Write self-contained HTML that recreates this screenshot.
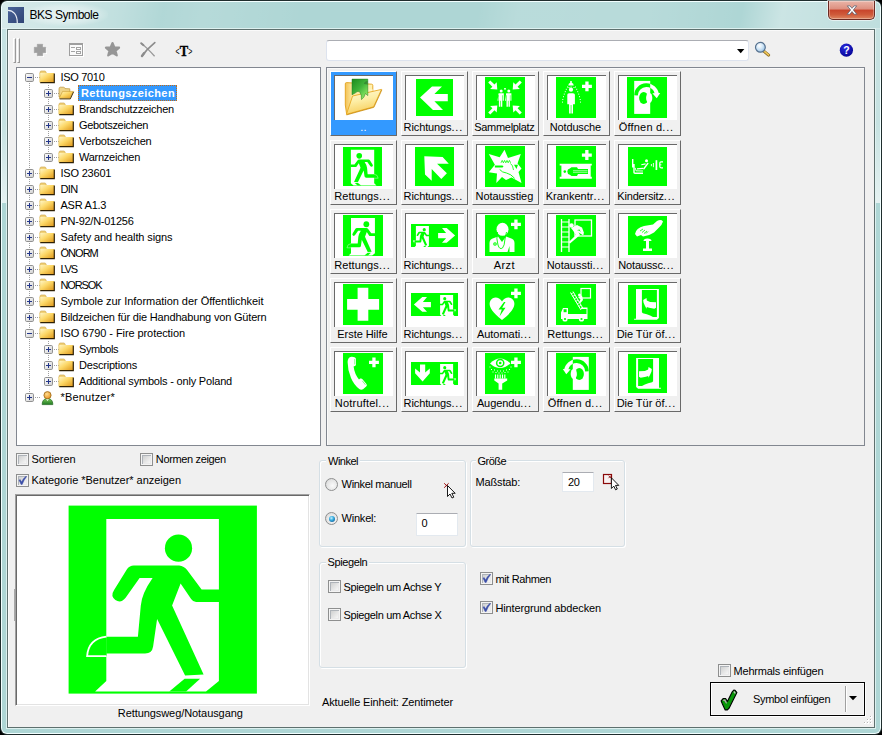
<!DOCTYPE html><html lang="de"><head><meta charset="utf-8"><title>BKS Symbole</title><style>
html,body{margin:0;padding:0}
body{width:882px;height:735px;background:#000;overflow:hidden;position:relative;font-family:"Liberation Sans", sans-serif;font-size:11px}
div,span,svg{position:absolute}
svg{overflow:visible}
.t{white-space:pre;letter-spacing:-0.22px}
#win{left:0;top:0;width:882px;height:735px;border-radius:7px 7px 7px 7px;background:#1f2d2d;overflow:hidden}
#glass{left:1px;top:1px;width:880px;height:733px;border-radius:6px;background:#f2ffff}
#streak{left:2px;top:2px;width:878px;height:731px;border-radius:5px;background:
 linear-gradient(100deg, rgba(255,255,255,0.5) 0px, rgba(255,255,255,0.36) 70px, rgba(255,255,255,0.22) 120px, rgba(255,255,255,0.04) 160px, rgba(255,255,255,0.1) 200px,rgba(255,255,255,0.0) 300px, rgba(255,255,255,0) 470px, rgba(255,255,255,0.14) 510px, rgba(255,255,255,0.12) 640px, rgba(255,255,255,0.0) 730px, rgba(255,255,255,0.36) 770px, rgba(255,255,255,0.26) 830px, rgba(255,255,255,0.2) 878px) 0 0/878px 27px no-repeat,
 #aed6d5}
.sg{top:28px;width:5px;height:175px;background:linear-gradient(to bottom, rgba(255,255,255,0.3) 0, rgba(255,255,255,0.3) 55%, rgba(255,255,255,0.68) 100%)}
#tglow{left:24px;top:3px;width:84px;height:23px;border-radius:12px;background:radial-gradient(ellipse at center, rgba(255,255,255,0.55) 0%, rgba(255,255,255,0.3) 50%, rgba(255,255,255,0) 75%)}
#close{left:828px;top:1px;width:47px;height:19px;box-sizing:border-box;border:1px solid #6b2a22;border-top:none;border-radius:0 0 5px 5px;background:linear-gradient(#eab5a8 0%,#dd8f7f 45%,#c8442b 50%,#cf5a3a 75%,#dd8560 100%);box-shadow:0 0 0 1px rgba(255,255,255,0.55), inset 0 0 0 1px rgba(255,255,255,0.3)}
#client{left:0;top:0;width:882px;height:735px}
#client:before{content:"";position:absolute;left:7px;top:29px;width:868px;height:699px;box-sizing:border-box;border:1px solid #5e706e;background:#f0f0f0;box-shadow:inset 1px 1px 0 #fafafa, 0 0 0 1px rgba(225,243,242,0.9)}
</style></head><body><div id="win"><div id="glass"></div><div id="streak"></div><div class="sg" style="left:2px"></div><div class="sg" style="left:875px"></div><svg style="left:8px;top:7px" width="16" height="16" viewBox="0 0 16 16"><defs><linearGradient id="ti" x1="0" y1="0" x2="1" y2="1"><stop offset="0" stop-color="#4a6499"/><stop offset="1" stop-color="#2f4474"/></linearGradient></defs><rect width="16" height="16" fill="url(#ti)"/><path d="M0 3.3 C5 3.3 9.3 7.5 9.3 16" fill="none" stroke="#e8edf5" stroke-width="1.2"/></svg><div id="tglow"></div><span class="t" id="t1" style="top:7.500000000000001px;font-size:12px;line-height:14px;color:#000;left:29.5px;letter-spacing:-0.459px;">BKS Symbole</span><div id="close"><svg width="12" height="10.300" viewBox="0 0 14 12" style="left:17.200px;top:3.800px"><path d="M1.5 1 L4.6 1 L7 3.9 L9.4 1 L12.5 1 L8.6 5.8 L12.7 10.8 L9.5 10.8 L7 7.7 L4.5 10.8 L1.3 10.8 L5.4 5.8 Z" fill="#fff" stroke="#5b5f6e" stroke-width="0.9" stroke-linejoin="round"/></svg></div><div id="client"><div style="left:13px;top:38px;width:3px;height:25px;box-sizing:border-box;border-left:1px solid #fff;border-top:1px solid #fff;border-right:1px solid #9a9a9a;border-bottom:1px solid #9a9a9a;background:#e4e4e4"></div><div style="left:17px;top:38px;width:3px;height:25px;box-sizing:border-box;border-left:1px solid #fff;border-top:1px solid #fff;border-right:1px solid #9a9a9a;border-bottom:1px solid #9a9a9a;background:#e4e4e4"></div><svg style="left:34px;top:44px" width="13" height="13" viewBox="0 0 13 13"><path d="M4 1h6v3h3v6h-3v3h-6v-3h-3v-6h3z" fill="#fff"/><path d="M3.300 0.300h5.400v3h3v5.400h-3v3h-5.400v-3h-3v-5.400h3z" fill="#9e9e9e" stroke="#9e9e9e" stroke-width="0.6" stroke-linejoin="round"/></svg><svg style="left:69px;top:43px" width="15" height="14" viewBox="0 0 15 14" shape-rendering="crispEdges"><rect x="0.500" y="0.500" width="13" height="12" fill="#fafafa" stroke="#9e9e9e"/><rect x="0" y="0" width="14" height="2" fill="#9e9e9e"/><path d="M2 4.500h4M2 8.500h4" stroke="#a4a4a4"/><rect x="7.500" y="4.500" width="4" height="2" fill="#fff" stroke="#a4a4a4"/><rect x="7.500" y="8.500" width="4" height="2" fill="#fff" stroke="#a4a4a4"/><path d="M14.500 1v12.500h-13.500" stroke="#fff" fill="none"/></svg><svg style="left:104px;top:41px" width="17" height="17" viewBox="0 0 17 17"><path d="M8.5 2 L10.4 6.3 L15.1 6.6 L11.6 9.700 L12.800 14.400 L8.500 11.900 L4.200 14.400 L5.400 9.700 L1.900 6.600 L6.600 6.300 Z" fill="#969696" stroke="#969696" stroke-width="2.1" stroke-linejoin="round"/></svg><svg style="left:139px;top:41px" width="18" height="17" viewBox="0 0 18 17"><path d="M2 2.2 C6 5 11 10 15.6 15.3" stroke="#9a9a9a" stroke-width="1.3" fill="none"/><path d="M15.8 1.6 C11 5.5 6.5 10 3.2 14.8" stroke="#8c8c8c" stroke-width="1.7" fill="none" stroke-linecap="round"/><path d="M2.2 2.2 L4.5 4.2" stroke="#8c8c8c" stroke-width="2" stroke-linecap="round"/><path d="M3 15 L5.2 12" stroke="#8c8c8c" stroke-width="2.4" stroke-linecap="round"/></svg><svg style="left:174px;top:42px" width="20" height="16" viewBox="174 42 20 16"><text x="184" y="55.600" font-family="Liberation Serif, serif" font-weight="bold" font-size="14" text-anchor="middle" stroke="#000" stroke-width="0.350" transform="translate(184 0) scale(0.9 1) translate(-184 0)">T</text><text x="177.600" y="54.800" font-family="Liberation Sans, sans-serif" font-size="11" text-anchor="middle" transform="translate(177.600 0) scale(0.640 1) translate(-177.600 0)">&lt;</text><text x="190.400" y="54.800" font-family="Liberation Sans, sans-serif" font-size="11" text-anchor="middle" transform="translate(190.400 0) scale(0.640 1) translate(-190.400 0)">&gt;</text></svg><div style="left:326px;top:40px;width:423px;height:21px;background:#fff;border:1px solid #dde3ee;border-top-color:#abadb3;border-radius:3px;box-sizing:border-box"></div><svg style="left:737px;top:49px" width="8" height="5" viewBox="0 0 8 5"><path d="M0 0h7.4L3.7 4.2z" fill="#000"/></svg><svg style="left:754px;top:41px" width="18" height="18" viewBox="0 0 18 18"><defs><radialGradient id="lens" cx="0.4" cy="0.35" r="0.7"><stop offset="0" stop-color="#ffffff"/><stop offset="0.5" stop-color="#cfe5f6"/><stop offset="1" stop-color="#8fbbe0"/></radialGradient></defs><path d="M9.5 9.8 L14.600 14.100" stroke="#8a6a22" stroke-width="3" stroke-linecap="round"/><path d="M9.5 9.6 L14.500 13.900" stroke="#eec658" stroke-width="1.700" stroke-linecap="round"/><circle cx="6.4" cy="6.3" r="4.9" fill="url(#lens)" stroke="#56718e" stroke-width="1.200"/></svg><svg style="left:839px;top:43px" width="15" height="15" viewBox="0 0 15 15"><defs><radialGradient id="hg" cx="0.4" cy="0.3" r="0.8"><stop offset="0" stop-color="#2a2ae0"/><stop offset="1" stop-color="#00008c"/></radialGradient></defs><circle cx="7.4" cy="7.2" r="6.6" fill="url(#hg)"/><text x="7.4" y="11" font-family="Liberation Sans, sans-serif" font-weight="bold" font-size="10.5" fill="#fff" text-anchor="middle">?</text></svg><svg width="0" height="0" style="position:absolute"><defs>
<linearGradient id="fg" x1="0" y1="0" x2="1" y2="1"><stop offset="0" stop-color="#fff6c6"/><stop offset="0.45" stop-color="#fcd766"/><stop offset="1" stop-color="#dd961a"/></linearGradient>
<linearGradient id="bg1" x1="0" y1="0" x2="1" y2="1"><stop offset="0" stop-color="#ffffff"/><stop offset="1" stop-color="#d0d0d0"/></linearGradient>
<g id="fold"><path d="M1 2.5 Q1 1 2.2 1 L5.8 1 Q6.8 1 7.2 2.6 L7.4 3.5 L1 3.5z" fill="#f1d27a" stroke="#caa040" stroke-width="0.6"/><rect x="1" y="3" width="14" height="9.4" fill="url(#fg)"/><path d="M1.2 12.700 L15.300 12.700 M15.300 13.200 L15.300 3.600" stroke="#2e2004" stroke-width="1.200" fill="none"/><path d="M0.8 3 L0.8 12.4" stroke="#e9c766" stroke-width="0.8"/></g>
<g id="foldo"><path d="M1 3 Q1 1.2 2.2 1.2 L5.4 1.2 Q6.6 1.2 7 2.6 L11.8 2.8 L11.8 6 L1 11z" fill="#efd58a" stroke="#b8923a" stroke-width="0.7"/><path d="M4.6 5.4 L15.3 5.4 L12 12.3 L1.2 12.3z" fill="url(#fg)" stroke="#c99a2e" stroke-width="0.6"/><path d="M1.6 12.9 L12.3 12.9 L15.6 5.8" stroke="#4a3508" stroke-width="1" fill="none"/></g>
<g id="plus"><rect x="0.5" y="0.5" width="8" height="8" rx="1.2" fill="url(#bg1)" stroke="#919191"/><path d="M2 4.5h5M4.5 2v5" stroke="#23368a" stroke-width="1"/></g>
<g id="minus"><rect x="0.5" y="0.5" width="8" height="8" rx="1.2" fill="url(#bg1)" stroke="#919191"/><path d="M2 4.5h5" stroke="#23368a" stroke-width="1"/></g>
</defs></svg><div style="left:16px;top:67px;width:305px;height:379px;background:#fff;border:1px solid #828790;box-sizing:border-box"></div><svg style="left:16px;top:67px" width="120" height="378" viewBox="16 67 120 378" shape-rendering="crispEdges"><g stroke="#a0a0a0" stroke-width="1" stroke-dasharray="1 1" fill="none"><path d="M29.500 83V392M48.500 85V158M48.500 341V382"/><path d="M35 77.5h5M54 93.5h5M54 109.5h5M54 125.5h5M54 141.5h5M54 157.5h5M35 173.5h5M35 189.5h5M35 205.5h5M35 221.5h5M35 237.5h5M35 253.5h5M35 269.5h5M35 285.5h5M35 301.5h5M35 317.5h5M35 333.5h5M54 349.5h5M54 365.5h5M54 381.5h5M35 397.5h5"/></g></svg><svg style="left:25px;top:73px" width="9" height="9"><use href="#minus"/></svg><svg style="left:39.3px;top:70.4px" width="17" height="14"><use href="#fold"/></svg><span class="t" id="t2" style="top:70px;font-size:11px;line-height:14px;color:#000;left:60.5px;letter-spacing:-0.311px;">ISO 7010</span><svg style="left:44px;top:89px" width="9" height="9"><use href="#plus"/></svg><svg style="left:58.3px;top:86.4px" width="17" height="14"><use href="#foldo"/></svg><div style="left:78px;top:85px;width:99px;height:16px;background:#3399ff;box-sizing:border-box;border:1px dotted #c86a10"></div><span class="t" id="t3" style="top:86px;font-size:11px;line-height:14px;color:#fff;font-weight:bold;left:81px;letter-spacing:0.399px;">Rettungszeichen</span><svg style="left:44px;top:105px" width="9" height="9"><use href="#plus"/></svg><svg style="left:58.3px;top:102.4px" width="17" height="14"><use href="#fold"/></svg><span class="t" id="t4" style="top:102px;font-size:11px;line-height:14px;color:#000;left:79.0px;letter-spacing:-0.226px;">Brandschutzzeichen</span><svg style="left:44px;top:121px" width="9" height="9"><use href="#plus"/></svg><svg style="left:58.3px;top:118.4px" width="17" height="14"><use href="#fold"/></svg><span class="t" id="t5" style="top:118px;font-size:11px;line-height:14px;color:#000;left:79.0px;letter-spacing:-0.338px;">Gebotszeichen</span><svg style="left:44px;top:137px" width="9" height="9"><use href="#plus"/></svg><svg style="left:58.3px;top:134.4px" width="17" height="14"><use href="#fold"/></svg><span class="t" id="t6" style="top:134px;font-size:11px;line-height:14px;color:#000;left:79.0px;letter-spacing:-0.194px;">Verbotszeichen</span><svg style="left:44px;top:153px" width="9" height="9"><use href="#plus"/></svg><svg style="left:58.3px;top:150.4px" width="17" height="14"><use href="#fold"/></svg><span class="t" id="t7" style="top:150px;font-size:11px;line-height:14px;color:#000;left:79.0px;letter-spacing:-0.254px;">Warnzeichen</span><svg style="left:25px;top:169px" width="9" height="9"><use href="#plus"/></svg><svg style="left:39.3px;top:166.4px" width="17" height="14"><use href="#fold"/></svg><span class="t" id="t8" style="top:166px;font-size:11px;line-height:14px;color:#000;left:60.5px;letter-spacing:-0.210px;">ISO 23601</span><svg style="left:25px;top:185px" width="9" height="9"><use href="#plus"/></svg><svg style="left:39.3px;top:182.4px" width="17" height="14"><use href="#fold"/></svg><span class="t" id="t9" style="top:182px;font-size:11px;line-height:14px;color:#000;left:60.5px;letter-spacing:-0.651px;">DIN</span><svg style="left:25px;top:201px" width="9" height="9"><use href="#plus"/></svg><svg style="left:39.3px;top:198.4px" width="17" height="14"><use href="#fold"/></svg><span class="t" id="t10" style="top:198px;font-size:11px;line-height:14px;color:#000;left:60.5px;letter-spacing:-0.250px;">ASR A1.3</span><svg style="left:25px;top:217px" width="9" height="9"><use href="#plus"/></svg><svg style="left:39.3px;top:214.4px" width="17" height="14"><use href="#fold"/></svg><span class="t" id="t11" style="top:214px;font-size:11px;line-height:14px;color:#000;left:60.5px;letter-spacing:-0.264px;">PN-92/N-01256</span><svg style="left:25px;top:233px" width="9" height="9"><use href="#plus"/></svg><svg style="left:39.3px;top:230.4px" width="17" height="14"><use href="#fold"/></svg><span class="t" id="t12" style="top:230px;font-size:11px;line-height:14px;color:#000;left:60.5px;letter-spacing:-0.103px;">Safety and health signs</span><svg style="left:25px;top:249px" width="9" height="9"><use href="#plus"/></svg><svg style="left:39.3px;top:246.4px" width="17" height="14"><use href="#fold"/></svg><span class="t" id="t13" style="top:246px;font-size:11px;line-height:14px;color:#000;left:60.5px;letter-spacing:-0.974px;">ÖNORM</span><svg style="left:25px;top:265px" width="9" height="9"><use href="#plus"/></svg><svg style="left:39.3px;top:262.4px" width="17" height="14"><use href="#fold"/></svg><span class="t" id="t14" style="top:262px;font-size:11px;line-height:14px;color:#000;left:60.5px;letter-spacing:-1.195px;">LVS</span><svg style="left:25px;top:281px" width="9" height="9"><use href="#plus"/></svg><svg style="left:39.3px;top:278.4px" width="17" height="14"><use href="#fold"/></svg><span class="t" id="t15" style="top:278px;font-size:11px;line-height:14px;color:#000;left:60.5px;letter-spacing:-1.115px;">NORSOK</span><svg style="left:25px;top:297px" width="9" height="9"><use href="#plus"/></svg><svg style="left:39.3px;top:294.4px" width="17" height="14"><use href="#fold"/></svg><span class="t" id="t16" style="top:294px;font-size:11px;line-height:14px;color:#000;left:60.5px;letter-spacing:-0.039px;">Symbole zur Information der Öffentlichkeit</span><svg style="left:25px;top:313px" width="9" height="9"><use href="#plus"/></svg><svg style="left:39.3px;top:310.4px" width="17" height="14"><use href="#fold"/></svg><span class="t" id="t17" style="top:310px;font-size:11px;line-height:14px;color:#000;left:60.5px;letter-spacing:-0.181px;">Bildzeichen für die Handhabung von Gütern</span><svg style="left:25px;top:329px" width="9" height="9"><use href="#minus"/></svg><svg style="left:39.3px;top:326.4px" width="17" height="14"><use href="#fold"/></svg><span class="t" id="t18" style="top:326px;font-size:11px;line-height:14px;color:#000;left:60.5px;letter-spacing:-0.079px;">ISO 6790 - Fire protection</span><svg style="left:44px;top:345px" width="9" height="9"><use href="#plus"/></svg><svg style="left:58.3px;top:342.4px" width="17" height="14"><use href="#fold"/></svg><span class="t" id="t19" style="top:342px;font-size:11px;line-height:14px;color:#000;left:79.0px;letter-spacing:-0.455px;">Symbols</span><svg style="left:44px;top:361px" width="9" height="9"><use href="#plus"/></svg><svg style="left:58.3px;top:358.4px" width="17" height="14"><use href="#fold"/></svg><span class="t" id="t20" style="top:358px;font-size:11px;line-height:14px;color:#000;left:79.0px;letter-spacing:-0.211px;">Descriptions</span><svg style="left:44px;top:377px" width="9" height="9"><use href="#plus"/></svg><svg style="left:58.3px;top:374.4px" width="17" height="14"><use href="#fold"/></svg><span class="t" id="t21" style="top:374px;font-size:11px;line-height:14px;color:#000;left:79.0px;letter-spacing:-0.187px;">Additional symbols - only Poland</span><svg style="left:25px;top:393px" width="9" height="9"><use href="#plus"/></svg><svg style="left:40.0px;top:389.7px" width="16" height="16" viewBox="0 0 16 16"><defs><linearGradient id="ug" x1="0" y1="0" x2="0" y2="1"><stop offset="0" stop-color="#7cc85a"/><stop offset="1" stop-color="#1f7a22"/></linearGradient><radialGradient id="uh" cx="0.4" cy="0.35" r="0.7"><stop offset="0" stop-color="#ffdc90"/><stop offset="1" stop-color="#e8901c"/></radialGradient></defs><path d="M2.2 14.6 C2.2 10.2 4.6 8.6 7.5 8.6 C10.4 8.6 12.8 10.2 12.8 14.6 Z" fill="url(#ug)" stroke="#2b6e28" stroke-width="0.8"/><path d="M6.2 9 L7.5 11.2 L8.8 9z" fill="#eef7e6"/><circle cx="7.5" cy="5.2" r="3.6" fill="url(#uh)" stroke="#9a6a1c" stroke-width="0.8"/></svg><span class="t" id="t22" style="top:390px;font-size:11px;line-height:14px;color:#000;left:60.5px;letter-spacing:0.191px;">*Benutzer*</span><div style="left:326px;top:67px;width:539px;height:379px;background:#f0f0f0;border:1px solid #828790;box-sizing:border-box;box-shadow:inset 1px 1px 0 #fafafa"></div><div style="left:330px;top:71px;width:67px;height:65px;background:#3399ff;box-sizing:border-box;border-top:1px solid #fff;border-left:1px solid #fff;border-right:1px solid #696969;border-bottom:1px solid #696969"></div><div style="left:334px;top:75px;width:59px;height:45px;background:#fff;box-sizing:border-box;border-top:1px solid #696969;border-left:1px solid #696969"></div><svg style="left:334px;top:74px" width="60" height="48" viewBox="0 0 60 48"><defs>
<linearGradient id="uf0" x1="0" y1="0" x2="1" y2="0"><stop offset="0" stop-color="#f3c255"/><stop offset="0.25" stop-color="#fde9a0"/><stop offset="1" stop-color="#fff2b4"/></linearGradient>
<linearGradient id="uf1" x1="0" y1="0" x2="0.3" y2="1"><stop offset="0" stop-color="#fffbe0"/><stop offset="0.5" stop-color="#fdeea6"/><stop offset="1" stop-color="#f7cf5e"/></linearGradient>
<linearGradient id="ug2" x1="0" y1="0" x2="0.8" y2="1"><stop offset="0" stop-color="#1c8a1c"/><stop offset="0.5" stop-color="#3fb33a"/><stop offset="1" stop-color="#96f06a"/></linearGradient></defs>
<path d="M11.300 9.800 Q11.300 8.600 12.600 8.600 L37.600 10.200 Q38.800 10.300 38.800 11.500 L38.800 33 L12.600 40 L11.300 31 Z" fill="url(#uf0)" stroke="#e3a21a" stroke-width="0.9" stroke-linejoin="round"/>
<path d="M33.800 15.600 L38.800 15.200 L38.800 33 L33.800 34.400z" fill="#fff6c8" opacity="0.8"/>
<path d="M18.600 22 L47.500 15.400 L39.600 32.800 L12.400 40.400 Z" fill="url(#uf1)" stroke="#e9a820" stroke-width="0.9" stroke-linejoin="round"/>
<path d="M12.600 40.900 L39.900 33.300 L47.900 15.800" fill="none" stroke="#c98e14" stroke-width="0.8"/>
<path d="M18 5.100 L33.800 5.100 L33.800 21.600 L31.400 19.600 Q30.500 23.500 27.500 25.600 Q28 21 25.500 17.600 Q23 17 21.500 18.800 L18 20.800 Z" fill="url(#ug2)" stroke="#1d7a1d" stroke-width="0.5"/>
<path d="M29.800 9.800 Q30.500 7.500 33.600 6.800 L33.600 10.600 Q31.500 10.400 29.800 9.800z" fill="#2a6a2a" opacity="0.55"/>
<path d="M18.800 21.600 L24 19.400 L26.400 20.800 L27.200 23.800 L31.200 19.800 L34 21.800 L34 15.700 L47.500 15.400 L39.600 32.800 L12.400 40.400 Z" fill="url(#uf1)" opacity="0"/>
</svg><span class="t" id="t23" style="top:120px;font-size:11px;line-height:14px;color:#fff;left:263.5px;width:200px;text-align:center;letter-spacing:0.188px;">..</span><div style="left:401px;top:71px;width:67px;height:65px;background:#f0f0f0;box-sizing:border-box;border-top:1px solid #fff;border-left:1px solid #fff;border-right:1px solid #696969;border-bottom:1px solid #696969"></div><div style="left:405px;top:75px;width:59px;height:45px;background:#fff;box-sizing:border-box;border-top:1px solid #696969;border-left:1px solid #696969"></div><svg style="left:416px;top:79px" width="37" height="37" viewBox="0 0 37 37"><rect width="37" height="37" fill="#00ff00"/><path d="M4 18.6 L16 7.4 L26 7.4 L18.4 15 L31.8 15 L31.8 22.2 L18.4 22.2 L27 31 L17 31 Z" fill="#fff"/></svg><span class="t" id="t24" style="top:120px;font-size:11px;line-height:14px;color:#000;left:333.4px;width:200px;text-align:center;letter-spacing:-0.116px;">Richtungs<span style="position:static;letter-spacing:0.850px">...</span></span><div style="left:472px;top:71px;width:67px;height:65px;background:#f0f0f0;box-sizing:border-box;border-top:1px solid #fff;border-left:1px solid #fff;border-right:1px solid #696969;border-bottom:1px solid #696969"></div><div style="left:476px;top:75px;width:59px;height:45px;background:#fff;box-sizing:border-box;border-top:1px solid #696969;border-left:1px solid #696969"></div><svg style="left:485px;top:77px" width="40" height="41" viewBox="0 0 40 41"><rect width="40" height="41" fill="#00ff00"/><path d="M5.3 3.4 L9.5 7.6 L11.7 5.3 L12.3 12.5 L5.1 11.9 L7.4 9.7 L3.2 5.5Z" fill="#fff"/><path d="M36.8 5.5 L32.6 9.7 L34.9 11.9 L27.7 12.5 L28.3 5.3 L30.5 7.6 L34.7 3.4Z" fill="#fff"/><path d="M3.2 35.4 L7.4 31.2 L5.1 29.0 L12.3 28.4 L11.7 35.6 L9.5 33.3 L5.3 37.5Z" fill="#fff"/><path d="M34.7 37.5 L30.5 33.3 L28.3 35.6 L27.7 28.4 L34.9 29.0 L32.6 31.2 L36.8 35.4Z" fill="#fff"/><circle cx="16.2" cy="14" r="1.5" fill="#fff"/><path d="M13.6 16.2h5.2v7.5h-1v-5.5h-0.5v11.5h-1.4v-6h-0.6v6h-1.4v-11.5h-0.5v5.5h-0.9z" fill="#fff"/><circle cx="23.8" cy="14" r="1.5" fill="#fff"/><path d="M21.2 16.2h5.2v7.5h-1v-5.5h-0.5v11.5h-1.4v-6h-0.6v6h-1.4v-11.5h-0.5v5.5h-0.9z" fill="#fff"/><rect x="19.2" y="11" width="1.6" height="1.6" fill="#fff"/></svg><span class="t" id="t25" style="top:120px;font-size:11px;line-height:14px;color:#000;left:404.4px;width:200px;text-align:center;letter-spacing:-0.307px;">Sammelplatz</span><div style="left:543px;top:71px;width:67px;height:65px;background:#f0f0f0;box-sizing:border-box;border-top:1px solid #fff;border-left:1px solid #fff;border-right:1px solid #696969;border-bottom:1px solid #696969"></div><div style="left:547px;top:75px;width:59px;height:45px;background:#fff;box-sizing:border-box;border-top:1px solid #696969;border-left:1px solid #696969"></div><svg style="left:556px;top:77px" width="40" height="41" viewBox="0 0 40 41"><rect width="40" height="41" fill="#00ff00"/><path d="M29.3 4.4h3.3v3.3h3.3v3.3h-3.3v3.3h-3.3v-3.3h-3.3v-3.3h3.3z" fill="#fff"/><path d="M12.300 8.600 Q12.300 6.200 14.200 5.800 L14.200 4h1.600 L15.800 5.800 Q17.700 6.200 17.700 8.600z" fill="#fff"/><circle cx="15" cy="12.700" r="2.100" fill="#fff"/><path d="M11.300 17.800 Q11.300 16.200 13 16.200 L17 16.200 Q18.900 16.200 18.900 17.800 L18.900 27.300 L17 27.300 L17 36.500 L15.400 36.500 L15.400 28 L14.700 28 L14.700 36.500 L13.100 36.500 L13.100 27.300 L11.300 27.300z" fill="#fff"/><g fill="#fff"><rect x="11" y="9.5" width="1" height="1"/><rect x="9.8" y="11.8" width="1" height="1"/><rect x="8.8" y="14.2" width="1" height="1"/><rect x="7.8" y="16.6" width="1" height="1"/><rect x="7" y="19.2" width="1" height="1"/><rect x="6.3" y="22" width="1" height="1"/><rect x="6" y="24.6" width="1" height="1"/><rect x="12.5" y="10" width="1" height="1"/><rect x="19" y="9.5" width="1" height="1"/><rect x="20.2" y="11.8" width="1" height="1"/><rect x="21.2" y="14.2" width="1" height="1"/><rect x="22.2" y="16.6" width="1" height="1"/><rect x="23" y="19.2" width="1" height="1"/><rect x="23.7" y="22" width="1" height="1"/><rect x="24" y="24.6" width="1" height="1"/><rect x="17.5" y="10" width="1" height="1"/><rect x="14.6" y="9.5" width="1" height="1"/></g></svg><span class="t" id="t26" style="top:120px;font-size:11px;line-height:14px;color:#000;left:475.4px;width:200px;text-align:center;letter-spacing:-0.155px;">Notdusche</span><div style="left:614px;top:71px;width:67px;height:65px;background:#f0f0f0;box-sizing:border-box;border-top:1px solid #fff;border-left:1px solid #fff;border-right:1px solid #696969;border-bottom:1px solid #696969"></div><div style="left:618px;top:75px;width:59px;height:45px;background:#fff;box-sizing:border-box;border-top:1px solid #696969;border-left:1px solid #696969"></div><svg style="left:627px;top:77px" width="40" height="41" viewBox="0 0 40 41"><rect width="40" height="41" fill="#00ff00"/><clipPath id="cpturnR"><rect x="7.200" y="3.900" width="16" height="33"/></clipPath><path d="M8.900 18.300 A10.600 10.600 0 0 1 30 17.400" fill="none" stroke="#fff" stroke-width="3.800"/><path d="M25.400 16.300 L33.200 16 L29.700 21.300z" fill="#fff"/><rect x="7.200" y="3.900" width="16" height="33" fill="#fff"/><g clip-path="url(#cpturnR)"><path d="M8.900 18.300 A10.600 10.600 0 0 1 30 17.400" fill="none" stroke="#00ff00" stroke-width="3.800"/><path d="M25.400 16.300 L33.200 16 L29.700 21.300z" fill="#00ff00"/></g><ellipse cx="16.700" cy="21" rx="4.600" ry="6.100" fill="#00ff00"/><ellipse cx="22.200" cy="20.900" rx="3.100" ry="5.200" fill="#fff"/></svg><span class="t" id="t27" style="top:120px;font-size:11px;line-height:14px;color:#000;left:546.4px;width:200px;text-align:center;letter-spacing:0.185px;">Öffnen d<span style="position:static;letter-spacing:0.850px">...</span></span><div style="left:330px;top:140px;width:67px;height:65px;background:#f0f0f0;box-sizing:border-box;border-top:1px solid #fff;border-left:1px solid #fff;border-right:1px solid #696969;border-bottom:1px solid #696969"></div><div style="left:334px;top:144px;width:59px;height:45px;background:#fff;box-sizing:border-box;border-top:1px solid #696969;border-left:1px solid #696969"></div><svg style="left:343px;top:147px" width="39" height="39" viewBox="0 0 39 39"><rect width="39" height="39" fill="#00ff00"/><g transform="translate(39,0) scale(-1,1)"><g transform="scale(0.2071 0.2074)"><path d="M37.7 13.5 L150.300 13.5 L150.3 175.300 L137.4 186 L26.500 186 L37.7 175.3 Z" fill="#fff"/><g fill="#00ff00"><circle cx="109.9" cy="42.6" r="13.6"/><path d="M65.1 59.8 L110.5 59.8 Q115.5 60.3 118.5 64.5 L133 83.9 L151.500 83.9 L151.500 96.5 L127.5 96.500 Q124.5 96.5 122.5 93.5 L112 78 L103.5 100 L135.000 168.8 L116.5 170 L88.5 113.5 L84.5 140.8 Q83.5 147.8 76.500 147.8 L37.7 147.8 L37.7 131.1 L69.3 131.1 L72.2 100 Q73 88 84 72.3 L71 72.3 L57 92.100 Q52.5 98 46.800 94.5 Q41.5 90.5 45.500 84.500 L58.5 63.5 Q61 59.8 65.1 59.8z"/><path d="M116 173.1 L131.500 173.1 L117.5 186 L100.700 186z"/></g><path d="M37.9 131.1 Q20 133 18.5 150.500 L37.9 150.500" fill="#00ff00" stroke="#fff" stroke-width="1.800"/></g></g></svg><span class="t" id="t28" style="top:189px;font-size:11px;line-height:14px;color:#000;left:262.4px;width:200px;text-align:center;letter-spacing:0.094px;">Rettungs<span style="position:static;letter-spacing:0.850px">...</span></span><div style="left:401px;top:140px;width:67px;height:65px;background:#f0f0f0;box-sizing:border-box;border-top:1px solid #fff;border-left:1px solid #fff;border-right:1px solid #696969;border-bottom:1px solid #696969"></div><div style="left:405px;top:144px;width:59px;height:45px;background:#fff;box-sizing:border-box;border-top:1px solid #696969;border-left:1px solid #696969"></div><svg style="left:415px;top:147px" width="39" height="39" viewBox="0 0 39 39"><rect width="39" height="39" fill="#00ff00"/><path d="M9.300 9.300 L27.600 10 L33.800 16.700 L22.100 16.700 L31.900 26.300 L26.300 31.900 L16.700 22.100 L16.700 33.800 L10 27.600 Z" fill="#fff"/></svg><span class="t" id="t29" style="top:189px;font-size:11px;line-height:14px;color:#000;left:333.4px;width:200px;text-align:center;letter-spacing:-0.116px;">Richtungs<span style="position:static;letter-spacing:0.850px">...</span></span><div style="left:472px;top:140px;width:67px;height:65px;background:#f0f0f0;box-sizing:border-box;border-top:1px solid #fff;border-left:1px solid #fff;border-right:1px solid #696969;border-bottom:1px solid #696969"></div><div style="left:476px;top:144px;width:59px;height:45px;background:#fff;box-sizing:border-box;border-top:1px solid #696969;border-left:1px solid #696969"></div><svg style="left:485px;top:146px" width="40" height="41" viewBox="0 0 40 41"><rect width="40" height="41" fill="#00ff00"/><path d="M19.500 3.800 L23 12 L35.800 7.900 L32.500 17.500 L36.500 22.500 L33.500 26 L36.500 37.100 L26.500 31.500 L21 34 L17 31 L11.300 37.100 L12 27.600 L3.800 26.300 L9.900 18.800 L3.800 7.900 L14.700 11.300 Z" fill="#fff"/><path d="M9.900 19.500 L17.500 19.500 L18.500 20.500 L17.500 21.600 L9.900 21.600z" fill="#00ff00"/><path d="M29 18.800 L33 18.800 L31.500 22.900z" fill="#00ff00"/><path d="M16 16.800 l1.200 -2.400 l1.200 2.400 l1.200 -2.400 l1.200 2.400 l1.200 -2.400 l1.200 2.400 l1.200 -2.400 l1.200 2.400" fill="none" stroke="#00ff00" stroke-width="0.800"/><path d="M14.700 23.500 Q17 26.500 21.500 27 Q26 28 29.700 32.400" fill="none" stroke="#00ff00" stroke-width="0.900"/><path d="M25.500 17.500 Q28 19 28.500 24" fill="none" stroke="#00ff00" stroke-width="0.800"/></svg><span class="t" id="t30" style="top:189px;font-size:11px;line-height:14px;color:#000;left:404.4px;width:200px;text-align:center;letter-spacing:-0.036px;">Notausstieg</span><div style="left:543px;top:140px;width:67px;height:65px;background:#f0f0f0;box-sizing:border-box;border-top:1px solid #fff;border-left:1px solid #fff;border-right:1px solid #696969;border-bottom:1px solid #696969"></div><div style="left:547px;top:144px;width:59px;height:45px;background:#fff;box-sizing:border-box;border-top:1px solid #696969;border-left:1px solid #696969"></div><svg style="left:556px;top:146px" width="40" height="41" viewBox="0 0 40 41"><rect width="40" height="41" fill="#00ff00"/><path d="M29.2 4.1h3.3v3.3h3.3v3.3h-3.3v3.3h-3.3v-3.3h-3.3v-3.3h3.3z" fill="#fff"/><path d="M3.700 17.700 H35.800 V19.500 H34.700 V30.700 H35.800 V32.700 H3.700 V30.700 H5.400 V19.500 H3.700z" fill="#fff"/><circle cx="8.800" cy="25.600" r="1.300" fill="#00ff00"/><path d="M11.300 25.500 Q11.300 22.800 13.800 22.400 L15.500 21.300 L21 21.300 L22 22.900 L32 22.900 L32 28 L22 28 L21 29.900 L15.500 29.900 L13.800 28.700 Q11.300 28.300 11.300 25.500z" fill="#00ff00"/><path d="M17 24.700 H31.500 M17 26.300 H31.500" stroke="#fff" stroke-width="0.600"/></svg><span class="t" id="t31" style="top:189px;font-size:11px;line-height:14px;color:#000;left:475.4px;width:200px;text-align:center;letter-spacing:0.009px;">Krankentr<span style="position:static;letter-spacing:0.850px">...</span></span><div style="left:614px;top:140px;width:67px;height:65px;background:#f0f0f0;box-sizing:border-box;border-top:1px solid #fff;border-left:1px solid #fff;border-right:1px solid #696969;border-bottom:1px solid #696969"></div><div style="left:618px;top:144px;width:59px;height:45px;background:#fff;box-sizing:border-box;border-top:1px solid #696969;border-left:1px solid #696969"></div><svg style="left:628px;top:147px" width="39" height="39" viewBox="0 0 39 39"><rect width="39" height="39" fill="#00ff00"/><path d="M4.700 12 V20.500 M6 17 V25.500 Q6 26.200 7 26.200 H15" fill="none" stroke="#fff" stroke-width="1.400"/><path d="M7.200 20.800 L8 23.800 L15 24" fill="none" stroke="#fff" stroke-width="0.900"/><circle cx="18.500" cy="13.700" r="1.500" fill="#fff"/><path d="M19.600 15.500 L20.600 16.600 L16.200 22.600 L14.800 22 Z" fill="#fff"/><path d="M13.300 17.700 L17.600 16.900 M9 21.900 L15 21.400" stroke="#fff" stroke-width="1.100"/><path d="M23.400 17v2.200M25.400 16v4.200" stroke="#fff" stroke-width="0.900"/><path d="M28.400 13.200v9.800" stroke="#fff" stroke-width="1.700"/><path d="M35 14.800 H33 Q31.800 14.800 31.800 16 V19.600 Q31.800 20.800 33 20.800 H35" fill="none" stroke="#fff" stroke-width="1.200"/><path d="M31.500 17.800h2" stroke="#fff" stroke-width="0.800"/></svg><span class="t" id="t32" style="top:189px;font-size:11px;line-height:14px;color:#000;left:546.4px;width:200px;text-align:center;letter-spacing:-0.182px;">Kindersitz<span style="position:static;letter-spacing:0.850px">...</span></span><div style="left:330px;top:209px;width:67px;height:65px;background:#f0f0f0;box-sizing:border-box;border-top:1px solid #fff;border-left:1px solid #fff;border-right:1px solid #696969;border-bottom:1px solid #696969"></div><div style="left:334px;top:213px;width:59px;height:45px;background:#fff;box-sizing:border-box;border-top:1px solid #696969;border-left:1px solid #696969"></div><svg style="left:343px;top:215px" width="40" height="41" viewBox="0 0 40 41"><rect width="40" height="41" fill="#00ff00"/><g transform="scale(0.2124 0.2181)"><path d="M37.7 13.5 L150.300 13.5 L150.3 175.300 L137.4 186 L26.500 186 L37.7 175.3 Z" fill="#fff"/><g fill="#00ff00"><circle cx="109.9" cy="42.6" r="13.6"/><path d="M65.1 59.8 L110.5 59.8 Q115.5 60.3 118.5 64.5 L133 83.9 L151.500 83.9 L151.500 96.5 L127.5 96.500 Q124.5 96.5 122.5 93.5 L112 78 L103.5 100 L135.000 168.8 L116.5 170 L88.5 113.5 L84.5 140.8 Q83.5 147.8 76.500 147.8 L37.7 147.8 L37.7 131.1 L69.3 131.1 L72.2 100 Q73 88 84 72.3 L71 72.3 L57 92.100 Q52.5 98 46.800 94.5 Q41.5 90.5 45.500 84.500 L58.5 63.5 Q61 59.8 65.1 59.8z"/><path d="M116 173.1 L131.500 173.1 L117.5 186 L100.700 186z"/></g><path d="M37.9 131.1 Q20 133 18.5 150.500 L37.9 150.500" fill="#00ff00" stroke="#fff" stroke-width="1.800"/></g></svg><span class="t" id="t33" style="top:258px;font-size:11px;line-height:14px;color:#000;left:262.4px;width:200px;text-align:center;letter-spacing:0.094px;">Rettungs<span style="position:static;letter-spacing:0.850px">...</span></span><div style="left:401px;top:209px;width:67px;height:65px;background:#f0f0f0;box-sizing:border-box;border-top:1px solid #fff;border-left:1px solid #fff;border-right:1px solid #696969;border-bottom:1px solid #696969"></div><div style="left:405px;top:213px;width:59px;height:45px;background:#fff;box-sizing:border-box;border-top:1px solid #696969;border-left:1px solid #696969"></div><svg style="left:411px;top:224px" width="47" height="23" viewBox="0 0 47 23"><rect width="47" height="23" fill="#00ff00"/><g transform="translate(0.550 0.460) scale(0.11550 0.12170)"><path d="M37.7 13.5 L150.300 13.5 L150.3 175.300 L137.4 186 L26.500 186 L37.7 175.3 Z" fill="#fff"/><g fill="#00ff00"><circle cx="109.9" cy="42.6" r="13.6"/><path d="M65.1 59.8 L110.5 59.8 Q115.5 60.3 118.5 64.5 L133 83.9 L151.500 83.9 L151.500 96.5 L127.5 96.500 Q124.5 96.5 122.5 93.5 L112 78 L103.5 100 L135.000 168.8 L116.5 170 L88.5 113.5 L84.5 140.8 Q83.5 147.8 76.500 147.8 L37.7 147.8 L37.7 131.1 L69.3 131.1 L72.2 100 Q73 88 84 72.3 L71 72.3 L57 92.100 Q52.5 98 46.800 94.5 Q41.5 90.5 45.500 84.500 L58.5 63.5 Q61 59.8 65.1 59.8z"/><path d="M116 173.1 L131.500 173.1 L117.5 186 L100.700 186z"/></g><path d="M37.9 131.1 Q20 133 18.5 150.500 L37.9 150.500" fill="#00ff00" stroke="#fff" stroke-width="1.800"/></g><rect x="2.300" y="16.300" width="1.300" height="1.300" transform="rotate(-40 3 17)" fill="#fff"/><path d="M44.100 11.600 L35.700 4.100 L31 4.100 L35.100 9 L27.100 9 L27.100 14.200 L35.100 14.200 L31 18.800 L35.700 18.800z" fill="#fff"/></svg><span class="t" id="t34" style="top:258px;font-size:11px;line-height:14px;color:#000;left:333.4px;width:200px;text-align:center;letter-spacing:-0.116px;">Richtungs<span style="position:static;letter-spacing:0.850px">...</span></span><div style="left:472px;top:209px;width:67px;height:65px;background:#f0f0f0;box-sizing:border-box;border-top:1px solid #fff;border-left:1px solid #fff;border-right:1px solid #696969;border-bottom:1px solid #696969"></div><div style="left:476px;top:213px;width:59px;height:45px;background:#fff;box-sizing:border-box;border-top:1px solid #696969;border-left:1px solid #696969"></div><svg style="left:485px;top:215px" width="40" height="41" viewBox="0 0 40 41"><rect width="40" height="41" fill="#00ff00"/><path d="M29.3 4.4h3.3v3.3h3.3v3.3h-3.3v3.3h-3.3v-3.3h-3.3v-3.3h3.3z" fill="#fff"/><ellipse cx="17.500" cy="14.300" rx="6" ry="6.500" fill="#fff"/><path d="M4.5 37 L4.5 28 Q4.5 24 9 23 L13 21.5 L17 27 L21 21.5 L25 23 Q29.5 24 29.5 28 L29.5 37 L24.5 37 L24.5 31 L22.5 37z" fill="#fff"/><path d="M12.5 17 Q11 24 13 30 Q14.5 35 17.5 33 Q19.5 31 20 24 L21.5 17" fill="none" stroke="#00ff00" stroke-width="0.9"/><circle cx="10" cy="29" r="1.8" fill="#00ff00"/><circle cx="10" cy="29" r="0.7" fill="#fff"/></svg><span class="t" id="t35" style="top:258px;font-size:11px;line-height:14px;color:#000;left:404.4px;width:200px;text-align:center;letter-spacing:0.409px;">Arzt</span><div style="left:543px;top:209px;width:67px;height:65px;background:#f0f0f0;box-sizing:border-box;border-top:1px solid #fff;border-left:1px solid #fff;border-right:1px solid #696969;border-bottom:1px solid #696969"></div><div style="left:547px;top:213px;width:59px;height:45px;background:#fff;box-sizing:border-box;border-top:1px solid #696969;border-left:1px solid #696969"></div><svg style="left:556px;top:215px" width="40" height="41" viewBox="0 0 40 41"><rect width="40" height="41" fill="#00ff00"/><path d="M5.5 4v33M13 4v33" stroke="#fff" stroke-width="1.3"/><path d="M5.5 7h7.5M5.5 12h7.5M5.5 17h7.5M5.5 22h7.5M5.5 27h7.5M5.5 32h7.5" stroke="#fff" stroke-width="1.1"/><rect x="19" y="5" width="16.5" height="16" fill="none" stroke="#fff" stroke-width="1.3"/><circle cx="15.5" cy="10.5" r="2.2" fill="#fff"/><path d="M15 13 L21 10 L26 12.5 L28 18 L26 19 L23.5 14.5 L21.5 15 L24 20 L14 28.5 L12.8 27 L20 20 L17 15.5z" fill="#fff"/><path d="M22 16 L27.5 19.5" stroke="#fff" stroke-width="2"/></svg><span class="t" id="t36" style="top:258px;font-size:11px;line-height:14px;color:#000;left:475.4px;width:200px;text-align:center;letter-spacing:-0.009px;">Notaussti<span style="position:static;letter-spacing:0.850px">...</span></span><div style="left:614px;top:209px;width:67px;height:65px;background:#f0f0f0;box-sizing:border-box;border-top:1px solid #fff;border-left:1px solid #fff;border-right:1px solid #696969;border-bottom:1px solid #696969"></div><div style="left:618px;top:213px;width:59px;height:45px;background:#fff;box-sizing:border-box;border-top:1px solid #696969;border-left:1px solid #696969"></div><svg style="left:628px;top:216px" width="39" height="39" viewBox="0 0 39 39"><rect width="39" height="39" fill="#00ff00"/><path d="M7 18 Q8 12 16 10 L25 8.5 L29 5 Q33 3 35 5.5 Q34 9 31 11.5 L26 16.5 Q21 20 15 20.5 L13 19 L9 20.5z" fill="#fff"/><path d="M12 15l3-2M14 16.5l3-2.5M16 17.5l3-2.5M18 17.5l2-2" stroke="#00ff00" stroke-width="0.8"/><path d="M15.5 25 Q15.5 22.5 19.5 22.5 Q23.5 22.5 23.5 25 L21 25 L21 32.5 L24 32.5 L24 35 L15 35 L15 32.5 L18 32.5 L18 25z" fill="#fff"/></svg><span class="t" id="t37" style="top:258px;font-size:11px;line-height:14px;color:#000;left:546.4px;width:200px;text-align:center;letter-spacing:-0.172px;">Notaussc<span style="position:static;letter-spacing:0.850px">...</span></span><div style="left:330px;top:278px;width:67px;height:65px;background:#f0f0f0;box-sizing:border-box;border-top:1px solid #fff;border-left:1px solid #fff;border-right:1px solid #696969;border-bottom:1px solid #696969"></div><div style="left:334px;top:282px;width:59px;height:45px;background:#fff;box-sizing:border-box;border-top:1px solid #696969;border-left:1px solid #696969"></div><svg style="left:343px;top:284px" width="40" height="41" viewBox="0 0 40 41"><rect width="40" height="41" fill="#00ff00"/><path d="M14.6 3.8h10.7v11.1h10.8v10.8H25.3v11.1H14.6V25.7H4.1V14.9h10.5z" fill="#fff"/></svg><span class="t" id="t38" style="top:327px;font-size:11px;line-height:14px;color:#000;left:262.4px;width:200px;text-align:center;letter-spacing:-0.050px;">Erste Hilfe</span><div style="left:401px;top:278px;width:67px;height:65px;background:#f0f0f0;box-sizing:border-box;border-top:1px solid #fff;border-left:1px solid #fff;border-right:1px solid #696969;border-bottom:1px solid #696969"></div><div style="left:405px;top:282px;width:59px;height:45px;background:#fff;box-sizing:border-box;border-top:1px solid #696969;border-left:1px solid #696969"></div><svg style="left:411px;top:293px" width="47" height="23" viewBox="0 0 47 23"><rect width="47" height="23" fill="#00ff00"/><g transform="translate(47,0) scale(-1,1)"><g transform="translate(0.550 0.460) scale(0.11550 0.12170)"><path d="M37.7 13.5 L150.300 13.5 L150.3 175.300 L137.4 186 L26.500 186 L37.7 175.3 Z" fill="#fff"/><g fill="#00ff00"><circle cx="109.9" cy="42.6" r="13.6"/><path d="M65.1 59.8 L110.5 59.8 Q115.5 60.3 118.5 64.5 L133 83.9 L151.500 83.9 L151.500 96.5 L127.5 96.500 Q124.5 96.5 122.5 93.5 L112 78 L103.5 100 L135.000 168.8 L116.5 170 L88.5 113.5 L84.5 140.8 Q83.5 147.8 76.500 147.8 L37.7 147.8 L37.7 131.1 L69.3 131.1 L72.2 100 Q73 88 84 72.3 L71 72.3 L57 92.100 Q52.5 98 46.800 94.5 Q41.5 90.5 45.500 84.500 L58.5 63.5 Q61 59.8 65.1 59.8z"/><path d="M116 173.1 L131.500 173.1 L117.5 186 L100.700 186z"/></g><path d="M37.9 131.1 Q20 133 18.5 150.500 L37.9 150.500" fill="#00ff00" stroke="#fff" stroke-width="1.800"/></g><rect x="2.300" y="16.300" width="1.300" height="1.300" transform="rotate(-40 3 17)" fill="#fff"/><path d="M44.100 11.600 L35.700 4.100 L31 4.100 L35.100 9 L27.100 9 L27.100 14.200 L35.100 14.200 L31 18.800 L35.700 18.800z" fill="#fff"/></g></svg><span class="t" id="t39" style="top:327px;font-size:11px;line-height:14px;color:#000;left:333.4px;width:200px;text-align:center;letter-spacing:-0.116px;">Richtungs<span style="position:static;letter-spacing:0.850px">...</span></span><div style="left:472px;top:278px;width:67px;height:65px;background:#f0f0f0;box-sizing:border-box;border-top:1px solid #fff;border-left:1px solid #fff;border-right:1px solid #696969;border-bottom:1px solid #696969"></div><div style="left:476px;top:282px;width:59px;height:45px;background:#fff;box-sizing:border-box;border-top:1px solid #696969;border-left:1px solid #696969"></div><svg style="left:485px;top:284px" width="40" height="41" viewBox="0 0 40 41"><rect width="40" height="41" fill="#00ff00"/><path d="M29.3 4.4h3.3v3.3h3.3v3.3h-3.3v3.3h-3.3v-3.3h-3.3v-3.3h3.3z" fill="#fff"/><path d="M17 36 C 4 26 3.5 20 5.5 16.5 C 8 12.5 14 12.5 17 17.5 C 20 12.5 26 12.5 28.5 16.5 C 30.5 20 30 26 17 36 Z" fill="#fff"/><path d="M19 18 L13.5 25.5 L16.8 25.5 L14.5 32.5 L20.5 23.8 L17.2 23.8 L20.5 18z" fill="#00ff00"/></svg><span class="t" id="t40" style="top:327px;font-size:11px;line-height:14px;color:#000;left:404.4px;width:200px;text-align:center;letter-spacing:-0.018px;">Automati<span style="position:static;letter-spacing:0.850px">...</span></span><div style="left:543px;top:278px;width:67px;height:65px;background:#f0f0f0;box-sizing:border-box;border-top:1px solid #fff;border-left:1px solid #fff;border-right:1px solid #696969;border-bottom:1px solid #696969"></div><div style="left:547px;top:282px;width:59px;height:45px;background:#fff;box-sizing:border-box;border-top:1px solid #696969;border-left:1px solid #696969"></div><svg style="left:556px;top:284px" width="40" height="41" viewBox="0 0 40 41"><rect width="40" height="41" fill="#00ff00"/><rect x="25" y="4.5" width="9.5" height="9.5" fill="none" stroke="#fff" stroke-width="1.2"/><path d="M14.5 8.5 L25 26 M17 7.5 L27 24.5" stroke="#fff" stroke-width="1"/><path d="M15 10l2.6-1.4M16.5 12.5l2.6-1.4M18 15l2.6-1.4M19.5 17.5l2.6-1.4M21 20l2.6-1.4M22.5 22.5l2.6-1.4" stroke="#fff" stroke-width="0.8"/><circle cx="23.5" cy="11" r="1.5" fill="#fff"/><path d="M22 13 L26 11.5 L27 16 L24.5 19 L23 18 L24.5 15.5z" fill="#fff"/><path d="M5 35 L5 28.5 L7 24 L12 24 L12 30 L30.5 30 L30.5 25 L25 25 L25 23.5 L31.5 23.5 L31.5 35 Z" fill="#fff"/><circle cx="9" cy="35" r="2.6" fill="#fff"/><circle cx="9" cy="35" r="1.1" fill="#00ff00"/><circle cx="25.5" cy="35" r="2.6" fill="#fff"/><circle cx="25.5" cy="35" r="1.1" fill="#00ff00"/><rect x="7.6" y="25.2" width="3" height="3" fill="#00ff00"/></svg><span class="t" id="t41" style="top:327px;font-size:11px;line-height:14px;color:#000;left:475.4px;width:200px;text-align:center;letter-spacing:0.094px;">Rettungs<span style="position:static;letter-spacing:0.850px">...</span></span><div style="left:614px;top:278px;width:67px;height:65px;background:#f0f0f0;box-sizing:border-box;border-top:1px solid #fff;border-left:1px solid #fff;border-right:1px solid #696969;border-bottom:1px solid #696969"></div><div style="left:618px;top:282px;width:59px;height:45px;background:#fff;box-sizing:border-box;border-top:1px solid #696969;border-left:1px solid #696969"></div><svg style="left:628px;top:285px" width="39" height="39" viewBox="0 0 39 39"><rect width="39" height="39" fill="#00ff00"/><path d="M8 4.100 L30.900 4.100 L30.900 32.900 L28.900 34.800 L6.100 34.800 L6.100 33.800 L8 33.700z" fill="#fff"/><path d="M13.900 5.100 L28.900 5.100 L28.900 31.900 L25 31.900 L22.100 30.600 L18.800 29.300 L14.900 28.300 L13.900 27.300z" fill="#00ff00"/><path d="M15.200 14.900 L18.500 13.100 L18.800 15.500 L22.100 16.900 L28 17.200 L28 22.700 L26.300 23.700 L21.100 22.700 L18.800 22.100 L18.500 23.700 L16.900 20.800 L15.500 17.500z" fill="#fff"/></svg><span class="t" id="t42" style="top:327px;font-size:11px;line-height:14px;color:#000;left:546.4px;width:200px;text-align:center;letter-spacing:-0.031px;">Die Tür öf<span style="position:static;letter-spacing:0.850px">...</span></span><div style="left:330px;top:347px;width:67px;height:65px;background:#f0f0f0;box-sizing:border-box;border-top:1px solid #fff;border-left:1px solid #fff;border-right:1px solid #696969;border-bottom:1px solid #696969"></div><div style="left:334px;top:351px;width:59px;height:45px;background:#fff;box-sizing:border-box;border-top:1px solid #696969;border-left:1px solid #696969"></div><svg style="left:343px;top:353px" width="40" height="41" viewBox="0 0 40 41"><rect width="40" height="41" fill="#00ff00"/><path d="M29.3 4.4h3.3v3.3h3.3v3.3h-3.3v3.3h-3.3v-3.3h-3.3v-3.3h3.3z" fill="#fff"/><path d="M5.500 5.500 Q6.500 3.600 9 3.800 L11.500 4.200 Q13 4.600 13 6.200 L13 11.500 Q12.800 13 11.200 13.300 L10.600 13.500 Q11.500 21 16 26.500 L17.200 25.600 Q18.500 25 19.500 26.200 L23.600 31.200 Q24.300 32.500 23.200 33.600 L20 36.300 Q18 37.400 16.300 36 Q11 32 8 25 Q4.600 17 4.600 9 Q4.600 7 5.500 5.500z" fill="#fff"/><path d="M11.800 6 L11.800 11.400 M19.300 27.800 L22.400 31.800" stroke="#00ff00" stroke-width="0.500" fill="none"/></svg><span class="t" id="t43" style="top:396px;font-size:11px;line-height:14px;color:#000;left:262.4px;width:200px;text-align:center;letter-spacing:0.211px;">Notruftel<span style="position:static;letter-spacing:0.850px">...</span></span><div style="left:401px;top:347px;width:67px;height:65px;background:#f0f0f0;box-sizing:border-box;border-top:1px solid #fff;border-left:1px solid #fff;border-right:1px solid #696969;border-bottom:1px solid #696969"></div><div style="left:405px;top:351px;width:59px;height:45px;background:#fff;box-sizing:border-box;border-top:1px solid #696969;border-left:1px solid #696969"></div><svg style="left:411px;top:362px" width="47" height="23" viewBox="0 0 47 23"><rect width="47" height="23" fill="#00ff00"/><g transform="translate(47,0) scale(-1,1)"><g transform="translate(0.550 0.460) scale(0.11550 0.12170)"><path d="M37.7 13.5 L150.300 13.5 L150.3 175.300 L137.4 186 L26.500 186 L37.7 175.3 Z" fill="#fff"/><g fill="#00ff00"><circle cx="109.9" cy="42.6" r="13.6"/><path d="M65.1 59.8 L110.5 59.8 Q115.5 60.3 118.5 64.5 L133 83.9 L151.500 83.9 L151.500 96.5 L127.5 96.500 Q124.5 96.5 122.5 93.5 L112 78 L103.5 100 L135.000 168.8 L116.5 170 L88.5 113.5 L84.5 140.8 Q83.5 147.8 76.500 147.8 L37.7 147.8 L37.7 131.1 L69.3 131.1 L72.2 100 Q73 88 84 72.3 L71 72.3 L57 92.100 Q52.5 98 46.800 94.5 Q41.5 90.5 45.500 84.500 L58.5 63.5 Q61 59.8 65.1 59.8z"/><path d="M116 173.1 L131.500 173.1 L117.5 186 L100.700 186z"/></g><path d="M37.9 131.1 Q20 133 18.5 150.500 L37.9 150.500" fill="#00ff00" stroke="#fff" stroke-width="1.800"/></g><rect x="2.300" y="16.300" width="1.300" height="1.300" transform="rotate(-40 3 17)" fill="#fff"/></g><path d="M11.600 19.600 L4.100 11.200 L4.100 6.500 L9 10.600 L9 2.600 L14.200 2.600 L14.200 10.600 L18.800 6.500 L18.800 11.200z" fill="#fff"/></svg><span class="t" id="t44" style="top:396px;font-size:11px;line-height:14px;color:#000;left:333.4px;width:200px;text-align:center;letter-spacing:-0.116px;">Richtungs<span style="position:static;letter-spacing:0.850px">...</span></span><div style="left:472px;top:347px;width:67px;height:65px;background:#f0f0f0;box-sizing:border-box;border-top:1px solid #fff;border-left:1px solid #fff;border-right:1px solid #696969;border-bottom:1px solid #696969"></div><div style="left:476px;top:351px;width:59px;height:45px;background:#fff;box-sizing:border-box;border-top:1px solid #696969;border-left:1px solid #696969"></div><svg style="left:485px;top:353px" width="40" height="41" viewBox="0 0 40 41"><rect width="40" height="41" fill="#00ff00"/><path d="M29.3 4.4h3.3v3.3h3.3v3.3h-3.3v3.3h-3.3v-3.3h-3.3v-3.3h3.3z" fill="#fff"/><path d="M5 10.400 Q15.200 0.400 25.400 10.400 Q15.200 19.600 5 10.400z" fill="#fff"/><circle cx="15.200" cy="10" r="4.300" fill="#00ff00"/><circle cx="15.200" cy="10" r="2.800" fill="#fff"/><circle cx="15.200" cy="10" r="1.300" fill="#00ff00"/><g fill="#fff"><rect x="4.5" y="13.5" width="1" height="1"/><rect x="6" y="16" width="1" height="1"/><rect x="7.5" y="18.5" width="1" height="1"/><rect x="9" y="16.5" width="1" height="1"/><rect x="10.5" y="19" width="1" height="1"/><rect x="12" y="17.5" width="1" height="1"/><rect x="13.5" y="19.5" width="1" height="1"/><rect x="15" y="17.5" width="1" height="1"/><rect x="16.5" y="19.5" width="1" height="1"/><rect x="18" y="17.5" width="1" height="1"/><rect x="19.5" y="19" width="1" height="1"/><rect x="21" y="16.5" width="1" height="1"/><rect x="22.5" y="18.5" width="1" height="1"/><rect x="24" y="16" width="1" height="1"/><rect x="25.5" y="13.5" width="1" height="1"/></g><path d="M10.500 21.500v4M12.800 21.500v4M15.200 21.500v4M17.500 21.500v4M19.800 21.500v4" stroke="#fff" stroke-width="1.100"/><path d="M9.300 25.500 H22.200 V27.500 L17.200 30.400 V36.800 H13.600 V30.400 L9.300 27.500z" fill="#fff"/></svg><span class="t" id="t45" style="top:396px;font-size:11px;line-height:14px;color:#000;left:404.4px;width:200px;text-align:center;letter-spacing:-0.109px;">Augendu<span style="position:static;letter-spacing:0.850px">...</span></span><div style="left:543px;top:347px;width:67px;height:65px;background:#f0f0f0;box-sizing:border-box;border-top:1px solid #fff;border-left:1px solid #fff;border-right:1px solid #696969;border-bottom:1px solid #696969"></div><div style="left:547px;top:351px;width:59px;height:45px;background:#fff;box-sizing:border-box;border-top:1px solid #696969;border-left:1px solid #696969"></div><svg style="left:556px;top:353px" width="40" height="41" viewBox="0 0 40 41"><rect width="40" height="41" fill="#00ff00"/><g transform="translate(40,0) scale(-1,1)"><clipPath id="cpturnL"><rect x="7.200" y="3.900" width="16" height="33"/></clipPath><path d="M8.900 18.300 A10.600 10.600 0 0 1 30 17.400" fill="none" stroke="#fff" stroke-width="3.800"/><path d="M25.400 16.300 L33.200 16 L29.700 21.300z" fill="#fff"/><rect x="7.200" y="3.900" width="16" height="33" fill="#fff"/><g clip-path="url(#cpturnL)"><path d="M8.900 18.300 A10.600 10.600 0 0 1 30 17.400" fill="none" stroke="#00ff00" stroke-width="3.800"/><path d="M25.400 16.300 L33.200 16 L29.700 21.300z" fill="#00ff00"/></g><ellipse cx="16.700" cy="21" rx="4.600" ry="6.100" fill="#00ff00"/><ellipse cx="22.200" cy="20.900" rx="3.100" ry="5.200" fill="#fff"/></g></svg><span class="t" id="t46" style="top:396px;font-size:11px;line-height:14px;color:#000;left:475.4px;width:200px;text-align:center;letter-spacing:0.185px;">Öffnen d<span style="position:static;letter-spacing:0.850px">...</span></span><div style="left:614px;top:347px;width:67px;height:65px;background:#f0f0f0;box-sizing:border-box;border-top:1px solid #fff;border-left:1px solid #fff;border-right:1px solid #696969;border-bottom:1px solid #696969"></div><div style="left:618px;top:351px;width:59px;height:45px;background:#fff;box-sizing:border-box;border-top:1px solid #696969;border-left:1px solid #696969"></div><svg style="left:628px;top:354px" width="39" height="39" viewBox="0 0 39 39"><rect width="39" height="39" fill="#00ff00"/><g transform="translate(39,0) scale(-1,1)"><path d="M8 4.100 L30.900 4.100 L30.900 32.900 L28.900 34.800 L6.100 34.800 L6.100 33.800 L8 33.700z" fill="#fff"/><path d="M13.900 5.100 L28.900 5.100 L28.900 31.900 L25 31.900 L22.100 30.600 L18.800 29.300 L14.900 28.300 L13.900 27.300z" fill="#00ff00"/><path d="M15.200 14.900 L18.500 13.100 L18.800 15.500 L22.100 16.900 L28 17.200 L28 22.700 L26.300 23.700 L21.100 22.700 L18.800 22.100 L18.500 23.700 L16.900 20.800 L15.500 17.500z" fill="#fff"/></g></svg><span class="t" id="t47" style="top:396px;font-size:11px;line-height:14px;color:#000;left:546.4px;width:200px;text-align:center;letter-spacing:-0.031px;">Die Tür öf<span style="position:static;letter-spacing:0.850px">...</span></span><div style="left:16px;top:453px;width:13px;height:13px;box-sizing:border-box;border:1px solid #8e8f8f;background:#f4f4f4;box-shadow:inset 0 0 0 1px #f4f4f4, inset 2px 2px 0 0 #aeb3b9, inset -1px -1px 0 1px #e9e9ea;"><div style="left:2px;top:2px;width:7px;height:7px;background:linear-gradient(135deg,#cfd0d0,#f6f6f6)"></div></div><span class="t" id="t48" style="top:452px;font-size:11px;line-height:14px;color:#000;left:31.5px;letter-spacing:-0.071px;">Sortieren</span><div style="left:140px;top:453px;width:13px;height:13px;box-sizing:border-box;border:1px solid #8e8f8f;background:#f4f4f4;box-shadow:inset 0 0 0 1px #f4f4f4, inset 2px 2px 0 0 #aeb3b9, inset -1px -1px 0 1px #e9e9ea;"><div style="left:2px;top:2px;width:7px;height:7px;background:linear-gradient(135deg,#cfd0d0,#f6f6f6)"></div></div><span class="t" id="t49" style="top:452px;font-size:11px;line-height:14px;color:#000;left:155.8px;letter-spacing:-0.353px;">Normen zeigen</span><div style="left:16px;top:474px;width:13px;height:13px;box-sizing:border-box;border:1px solid #8e8f8f;background:#f4f4f4;box-shadow:inset 0 0 0 1px #f4f4f4, inset 2px 2px 0 0 #aeb3b9, inset -1px -1px 0 1px #e9e9ea;"><div style="left:2px;top:2px;width:7px;height:7px;background:linear-gradient(135deg,#cfd0d0,#f6f6f6)"></div><svg width="13" height="13" viewBox="0 0 13 13" style="left:-1px;top:-1px"><path d="M3 6.2 L4.2 5.6 L5.6 8 Q7 4.500 10 2.200 L10.500 2.800 Q8 5.500 6.200 10.400 L5 10.400 Q4.200 8 3 6.200z" fill="#3c4fa8" stroke="#3c4fa8" stroke-width="0.5"/></svg></div><span class="t" id="t50" style="top:473.3px;font-size:11px;line-height:14px;color:#000;left:31.5px;letter-spacing:-0.033px;">Kategorie *Benutzer* anzeigen</span><div style="left:15px;top:494px;width:295px;height:212px;background:#fff;box-sizing:border-box;border-top:1px solid #a0a0a0;border-left:1px solid #a0a0a0;border-right:1px solid #fff;border-bottom:1px solid #fff;box-shadow:inset 1px 1px 0 #696969, inset -1px -1px 0 #e3e3e3"></div><svg style="left:68px;top:505px" width="190" height="190" viewBox="-0.6 -0.6 190 190"><rect width="188.3" height="188" fill="#00ff00"/><path d="M37.7 13.5 L150.300 13.5 L150.3 175.300 L137.4 186 L26.500 186 L37.7 175.3 Z" fill="#fff"/><g fill="#00ff00"><circle cx="109.9" cy="42.6" r="13.6"/><path d="M65.1 59.8 L110.5 59.8 Q115.5 60.3 118.5 64.5 L133 83.9 L151.500 83.9 L151.500 96.5 L127.5 96.500 Q124.5 96.5 122.5 93.5 L112 78 L103.5 100 L135.000 168.8 L116.5 170 L88.5 113.5 L84.5 140.8 Q83.5 147.8 76.500 147.8 L37.7 147.8 L37.7 131.1 L69.3 131.1 L72.2 100 Q73 88 84 72.3 L71 72.3 L57 92.100 Q52.5 98 46.800 94.5 Q41.5 90.5 45.500 84.500 L58.5 63.5 Q61 59.8 65.1 59.8z"/><path d="M116 173.1 L131.500 173.1 L117.5 186 L100.700 186z"/></g><path d="M37.9 131.1 Q20 133 18.5 150.500 L37.9 150.500" fill="#00ff00" stroke="#fff" stroke-width="1.800"/></svg><span class="t" id="t51" style="top:706.4px;font-size:11px;line-height:14px;color:#000;left:80.30000000000001px;width:200px;text-align:center;letter-spacing:-0.072px;">Rettungsweg/Notausgang</span><div style="left:14px;top:589px;width:1px;height:32px;background:#a8a8a8"></div><div style="left:319px;top:460px;width:147px;height:87px;box-sizing:border-box;border:1px solid #d5dfe5;border-radius:3px;box-shadow:1px 1px 0 #fff, inset 1px 1px 0 #fff"></div><div style="left:326px;top:458px;width:34px;height:5px;background:#f0f0f0"></div><span class="t" id="t52" style="top:453.8px;font-size:11px;line-height:14px;color:#000;left:328px;letter-spacing:-0.503px;">Winkel</span><div style="left:325.2px;top:478.1px;width:13px;height:13px;box-sizing:border-box;border:1px solid #8e8f8f;border-radius:50%;background:radial-gradient(circle at 60% 60%,#fafafa 0%,#e4e4e4 60%,#c8c8c8 100%);"></div><span class="t" id="t53" style="top:477px;font-size:11px;line-height:14px;color:#000;left:341.6px;letter-spacing:-0.328px;">Winkel manuell</span><div style="left:325.2px;top:512.1px;width:13px;height:13px;box-sizing:border-box;border:1px solid #8e8f8f;border-radius:50%;background:radial-gradient(circle at 60% 60%,#fafafa 0%,#e4e4e4 60%,#c8c8c8 100%);"><div style="left:2.500px;top:2.500px;width:6px;height:6px;border-radius:50%;background:radial-gradient(circle at 40% 35%,#c8f0ff 0%,#38aee0 40%,#0f5a96 85%,#0b3f70 100%)"></div></div><span class="t" id="t54" style="top:511.4px;font-size:11px;line-height:14px;color:#000;left:341.6px;letter-spacing:-0.223px;">Winkel:</span><div style="left:416px;top:513px;width:42px;height:23px;background:#fff;box-sizing:border-box;border:1px solid #e3e9ef;border-top-color:#abadb3;border-radius:1px"></div><span class="t" id="t55" style="top:516.3px;font-size:11px;line-height:14px;color:#000;left:421.4px;">0</span><svg style="left:443px;top:481px" width="14" height="18" viewBox="0 0 14 18"><path d="M1.200 2.300l4.400 4.400M5.600 2.300l-4.400 4.400" stroke="#9a0808" stroke-width="1"/><path d="M4.500 4.500 L4.500 15.500 L7 13 L9 17 L10.800 16.200 L8.800 12.300 L12.200 12.300z" fill="#fff" stroke="#000" stroke-width="0.9"/></svg><div style="left:470px;top:460px;width:155px;height:87px;box-sizing:border-box;border:1px solid #d5dfe5;border-radius:3px;box-shadow:1px 1px 0 #fff, inset 1px 1px 0 #fff"></div><div style="left:475.5px;top:458px;width:32.5px;height:5px;background:#f0f0f0"></div><span class="t" id="t56" style="top:453.6px;font-size:11px;line-height:14px;color:#000;left:477.5px;letter-spacing:-0.537px;">Größe</span><span class="t" id="t57" style="top:475.2px;font-size:11px;line-height:14px;color:#000;left:475.6px;letter-spacing:-0.170px;">Maßstab:</span><div style="left:562px;top:472px;width:32px;height:20px;background:#fff;box-sizing:border-box;border:1px solid #e3e9ef;border-top-color:#abadb3;border-radius:1px"></div><span class="t" id="t58" style="top:475.2px;font-size:11px;line-height:14px;color:#000;left:568px;letter-spacing:-0.325px;">20</span><svg style="left:602px;top:473px" width="18" height="18" viewBox="0 0 18 18"><rect x="1.500" y="1.500" width="8" height="9" fill="#f8f2f2" stroke="#8a0808" stroke-width="1.200"/><path d="M6.500 2.600l2.600 2.600M9.100 2.600l-2.600 2.600" stroke="#8a0808" stroke-width="0.800"/><path d="M9.400 4.800 L9.400 15.500 L11.800 13.100 L13.600 16.800 L15.300 16 L13.500 12.400 L16.800 12.400z" fill="#fff" stroke="#000" stroke-width="0.9"/></svg><div style="left:319px;top:562px;width:147px;height:106px;box-sizing:border-box;border:1px solid #d5dfe5;border-radius:3px;box-shadow:1px 1px 0 #fff, inset 1px 1px 0 #fff"></div><div style="left:325.5px;top:560px;width:43.7px;height:5px;background:#f0f0f0"></div><span class="t" id="t59" style="top:555.4px;font-size:11px;line-height:14px;color:#000;left:327.5px;letter-spacing:-0.391px;">Spiegeln</span><div style="left:328px;top:580px;width:13px;height:13px;box-sizing:border-box;border:1px solid #8e8f8f;background:#f4f4f4;box-shadow:inset 0 0 0 1px #f4f4f4, inset 2px 2px 0 0 #aeb3b9, inset -1px -1px 0 1px #e9e9ea;"><div style="left:2px;top:2px;width:7px;height:7px;background:linear-gradient(135deg,#cfd0d0,#f6f6f6)"></div></div><span class="t" id="t60" style="top:580px;font-size:11px;line-height:14px;color:#000;left:343.4px;letter-spacing:-0.336px;">Spiegeln um Achse Y</span><div style="left:328px;top:608px;width:13px;height:13px;box-sizing:border-box;border:1px solid #8e8f8f;background:#f4f4f4;box-shadow:inset 0 0 0 1px #f4f4f4, inset 2px 2px 0 0 #aeb3b9, inset -1px -1px 0 1px #e9e9ea;"><div style="left:2px;top:2px;width:7px;height:7px;background:linear-gradient(135deg,#cfd0d0,#f6f6f6)"></div></div><span class="t" id="t61" style="top:608px;font-size:11px;line-height:14px;color:#000;left:343.4px;letter-spacing:-0.346px;">Spiegeln um Achse X</span><div style="left:480px;top:572px;width:13px;height:13px;box-sizing:border-box;border:1px solid #8e8f8f;background:#f4f4f4;box-shadow:inset 0 0 0 1px #f4f4f4, inset 2px 2px 0 0 #aeb3b9, inset -1px -1px 0 1px #e9e9ea;"><div style="left:2px;top:2px;width:7px;height:7px;background:linear-gradient(135deg,#cfd0d0,#f6f6f6)"></div><svg width="13" height="13" viewBox="0 0 13 13" style="left:-1px;top:-1px"><path d="M3 6.2 L4.2 5.6 L5.6 8 Q7 4.500 10 2.200 L10.500 2.800 Q8 5.500 6.200 10.400 L5 10.400 Q4.200 8 3 6.200z" fill="#3c4fa8" stroke="#3c4fa8" stroke-width="0.5"/></svg></div><span class="t" id="t62" style="top:572px;font-size:11px;line-height:14px;color:#000;left:495.4px;letter-spacing:-0.370px;">mit Rahmen</span><div style="left:480px;top:601px;width:13px;height:13px;box-sizing:border-box;border:1px solid #8e8f8f;background:#f4f4f4;box-shadow:inset 0 0 0 1px #f4f4f4, inset 2px 2px 0 0 #aeb3b9, inset -1px -1px 0 1px #e9e9ea;"><div style="left:2px;top:2px;width:7px;height:7px;background:linear-gradient(135deg,#cfd0d0,#f6f6f6)"></div><svg width="13" height="13" viewBox="0 0 13 13" style="left:-1px;top:-1px"><path d="M3 6.2 L4.2 5.6 L5.6 8 Q7 4.500 10 2.200 L10.500 2.800 Q8 5.500 6.200 10.400 L5 10.400 Q4.200 8 3 6.200z" fill="#3c4fa8" stroke="#3c4fa8" stroke-width="0.5"/></svg></div><span class="t" id="t63" style="top:601px;font-size:11px;line-height:14px;color:#000;left:495.4px;letter-spacing:-0.133px;">Hintergrund abdecken</span><span class="t" id="t64" style="top:695px;font-size:11px;line-height:14px;color:#000;left:322px;letter-spacing:-0.126px;">Aktuelle Einheit: Zentimeter</span><div style="left:718px;top:664px;width:13px;height:13px;box-sizing:border-box;border:1px solid #8e8f8f;background:#f4f4f4;box-shadow:inset 0 0 0 1px #f4f4f4, inset 2px 2px 0 0 #aeb3b9, inset -1px -1px 0 1px #e9e9ea;"><div style="left:2px;top:2px;width:7px;height:7px;background:linear-gradient(135deg,#cfd0d0,#f6f6f6)"></div></div><span class="t" id="t65" style="top:663.7px;font-size:11px;line-height:14px;color:#000;left:733.6px;letter-spacing:-0.221px;">Mehrmals einfügen</span><div style="left:710px;top:682px;width:155px;height:34px;box-sizing:border-box;border:1px solid #000;background:#f0f0f0;box-shadow:1px 1px 0 #fff, inset 1px 1px 0 #fff, inset -1px -1px 0 #f8f8f8"></div><svg style="left:719px;top:688px" width="22" height="24" viewBox="0 0 22 24"><path d="M2.100 12.800 L4.300 10.500 L6.600 10.500 L8.400 13.500 L13 4.200 L14.800 2.100 L16.100 2.300 L17.900 4.600 L10.200 20 L8.400 21.900 L6.200 21.900 L3.400 16z" fill="#0a970a" stroke="#000" stroke-width="1.100" stroke-linejoin="round"/><path d="M3.500 12.300 L5 11.400 L6.300 11.600 L7.800 14.600 L7.300 16 L5.600 13.200z" fill="#b9a9b4"/><path d="M14.300 4 L15.300 3 L16.700 4.800 L16 6z" fill="#c4b8c0"/></svg><span class="t" id="t66" style="top:692px;font-size:11px;line-height:14px;color:#000;left:753px;letter-spacing:-0.317px;">Symbol einfügen</span><div style="left:845px;top:686px;width:1px;height:26px;background:#a0a0a0"></div><div style="left:846px;top:686px;width:1px;height:26px;background:#fff"></div><svg style="left:849px;top:696px" width="9" height="5" viewBox="0 0 9 5"><path d="M0 0h8L4 4.200z" fill="#000"/></svg><svg style="left:862px;top:716px" width="11" height="9" viewBox="0 0 11 9" shape-rendering="crispEdges"><rect x="8" y="0" width="2" height="2" fill="#fff"/><rect x="8" y="0" width="1" height="1" fill="#b8b8b8"/><rect x="5" y="3" width="2" height="2" fill="#fff"/><rect x="5" y="3" width="1" height="1" fill="#b8b8b8"/><rect x="8" y="3" width="2" height="2" fill="#fff"/><rect x="8" y="3" width="1" height="1" fill="#b8b8b8"/><rect x="2" y="6" width="2" height="2" fill="#fff"/><rect x="2" y="6" width="1" height="1" fill="#b8b8b8"/><rect x="5" y="6" width="2" height="2" fill="#fff"/><rect x="5" y="6" width="1" height="1" fill="#b8b8b8"/><rect x="8" y="6" width="2" height="2" fill="#fff"/><rect x="8" y="6" width="1" height="1" fill="#b8b8b8"/></svg></div></div></body></html>
